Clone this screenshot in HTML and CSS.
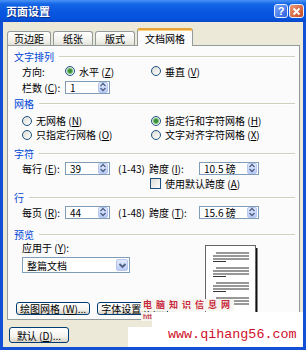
FILE: index.html
```html
<!DOCTYPE html>
<html lang="zh-CN">
<head>
    <meta charset="UTF-8">
    <title>页面设置</title>
    <link rel="stylesheet" href="styles.css">
</head>
<body>
<div class="window">
    <div class="titlebar">
        <span class="title">页面设置</span>
        <div class="title-buttons">
            <span class="tb-btn help">?</span>
            <span class="tb-btn close"><svg width="9" height="9" viewBox="0 0 9 9"><path d="M1.5 1.5L7.5 7.5M7.5 1.5L1.5 7.5" stroke="#fff" stroke-width="1.8"/></svg></span>
        </div>
    </div>

    <div class="client">
        <div class="tabs">
            <span class="tab">页边距</span>
            <span class="tab">纸张</span>
            <span class="tab">版式</span>
            <span class="tab active">文档网格</span>
        </div>

        <div class="panel">
            <div class="legend"><span>文字排列</span></div>
            <div class="row row-dir">
                <span>方向:</span>
                <label class="opt"><i class="radio checked"></i>水平 (<u>Z</u>)</label>
                <label class="opt"><i class="radio"></i>垂直 (<u>V</u>)</label>
            </div>
            <div class="row row-cols">
                <span>栏数 (<u>C</u>):</span>
                <span class="spin"><span class="val">1</span><span class="spin-btn"><svg width="8" height="10" viewBox="0 0 8 10"><path d="M1.5 4L4 1.5L6.5 4M1.5 6L4 8.5L6.5 6" fill="none" stroke="#4d6185" stroke-width="1.3"/></svg></span></span>
            </div>

            <div class="legend gap1"><span>网格</span></div>
            <div class="row row-grid first">
                <label class="opt"><i class="radio"></i>无网格 (<u>N</u>)</label>
                <label class="opt"><i class="radio checked"></i>指定行和字符网格 (<u>H</u>)</label>
            </div>
            <div class="row row-grid second">
                <label class="opt"><i class="radio"></i>只指定行网格 (<u>O</u>)</label>
                <label class="opt"><i class="radio"></i>文字对齐字符网格 (<u>X</u>)</label>
            </div>

            <div class="legend gap6"><span>字符</span></div>
            <div class="row row-num">
                <span>每行 (<u>E</u>):</span>
                <span class="spin"><span class="val">39</span><span class="spin-btn"><svg width="8" height="10" viewBox="0 0 8 10"><path d="M1.5 4L4 1.5L6.5 4M1.5 6L4 8.5L6.5 6" fill="none" stroke="#4d6185" stroke-width="1.3"/></svg></span></span>
                <span class="range">(1-43)</span>
                <span>跨度 (<u>I</u>):</span>
                <span class="spin"><span class="val">10.5 磅</span><span class="spin-btn"><svg width="8" height="10" viewBox="0 0 8 10"><path d="M1.5 4L4 1.5L6.5 4M1.5 6L4 8.5L6.5 6" fill="none" stroke="#4d6185" stroke-width="1.3"/></svg></span></span>
            </div>
            <div class="row row-num check-row">
                <label class="opt default-pitch"><i class="check"></i>使用默认跨度 (<u>A</u>)</label>
            </div>

            <div class="legend"><span>行</span></div>
            <div class="row row-num">
                <span>每页 (<u>R</u>):</span>
                <span class="spin"><span class="val">44</span><span class="spin-btn"><svg width="8" height="10" viewBox="0 0 8 10"><path d="M1.5 4L4 1.5L6.5 4M1.5 6L4 8.5L6.5 6" fill="none" stroke="#4d6185" stroke-width="1.3"/></svg></span></span>
                <span class="range">(1-48)</span>
                <span>跨度 (<u>T</u>):</span>
                <span class="spin"><span class="val">15.6 磅</span><span class="spin-btn"><svg width="8" height="10" viewBox="0 0 8 10"><path d="M1.5 4L4 1.5L6.5 4M1.5 6L4 8.5L6.5 6" fill="none" stroke="#4d6185" stroke-width="1.3"/></svg></span></span>
            </div>

            <div class="legend gap7"><span>预览</span></div>
            <div class="lower">
                <div class="lower-left">
                    <span class="apply-label">应用于 (<u>Y</u>):</span>
                    <div class="select">
                        <span class="val">整篇文档</span>
                        <span class="select-btn"><svg width="9" height="7" viewBox="0 0 9 7"><path d="M1.5 2L4.5 5L7.5 2" fill="none" stroke="#4d6185" stroke-width="1.8"/></svg></span>
                    </div>
                    <div class="btn-row">
                        <button class="btn">绘图网格 (<u>W</u>)...</button>
                        <button class="btn">字体设置 (<u>F</u>)...</button>
                    </div>
                </div>
                <svg class="page" width="53" height="70" viewBox="0 0 53 70">
                    <rect x="50" y="3" width="2.5" height="67" fill="#111"/>
                    <rect x="3" y="67.5" width="49.5" height="2.5" fill="#111"/>
                    <rect x="0.5" y="0.5" width="50" height="67" fill="#fff" stroke="#666"/>
                    <g stroke="#333" stroke-width="1.1">
                        <path d="M11 8H44M8 11H44M8 14H44M8 16.5H21"/>
                        <path d="M11 23H44M8 26H44M8 29H44M8 31.5H21"/>
                        <path d="M11 38H44M8 41H44M8 44H44M8 46.5H21"/>
                        <path d="M11 53H44M8 56H44M8 59H44M8 61.5H21"/>
                    </g>
                </svg>
            </div>
        </div>

        <div class="footer">
            <button class="btn btn-default">默认 (<u>D</u>)...</button>
        </div>
    </div>

    <div class="wm-cn">电脑知识信息网</div>
    <div class="wm-http">http://www</div>
    <div class="wm-box"><span>www.qihang56.com</span></div>
</div>
</body>
</html>
```

FILE: styles.css
```css
* {
    box-sizing: border-box;
}
body {
    margin: 0;
    font-family: "Noto Sans CJK SC", "Noto Sans", sans-serif;
    font-size: 10px;
    color: #000;
}
.window {
    position: relative;
    width: 306px;
    height: 350px;
    overflow: hidden;
    display: flex;
    flex-direction: column;
    background: #1250d6;
}
.titlebar {
    height: 22px;
    flex-shrink: 0;
    display: flex;
    align-items: center;
    justify-content: space-between;
    padding: 0 2px 0 6px;
    background: linear-gradient(#4a93f8 0%, #1466e6 18%, #0a58e0 50%, #0553dc 85%, #0a47c8 100%);
}
.title {
    color: #fff;
    font-weight: bold;
    font-size: 11px;
    text-shadow: 1px 1px 0 #0b2c8a;
}
.title-buttons {
    display: flex;
    gap: 1px;
}
.tb-btn {
    width: 14px;
    height: 14px;
    border: 1px solid #e8eefc;
    border-radius: 3px;
    display: flex;
    align-items: center;
    justify-content: center;
    color: #fff;
    font: bold 11px "Liberation Sans", sans-serif;
}
.help {
    background: linear-gradient(135deg, #7aa5f8, #2b5fdf);
}
.close {
    width: 15px;
    background: linear-gradient(135deg, #eb9a78, #c9471f);
}
.client {
    flex: 1;
    margin: 0 3px 3px;
    background: #ece9d8;
    display: flex;
    flex-direction: column;
}
.tabs {
    height: 24px;
    display: flex;
    align-items: flex-end;
    gap: 2px;
    padding-left: 4px;
    margin-bottom: -1px;
}
.tab {
    height: 14px;
    min-width: 40px;
    margin-bottom: 1px;
    padding: 0 6px;
    display: flex;
    align-items: center;
    justify-content: center;
    border: 1px solid #919b9c;
    border-bottom: none;
    border-radius: 3px 3px 0 0;
    background: linear-gradient(#fff, #f0efe9 70%, #e3e1d6);
}
.tab.active {
    position: relative;
    z-index: 1;
    height: 18px;
    margin-bottom: 0;
    padding: 0 7px;
    border-top: 2px solid #e8a23a;
    box-shadow: inset 0 1px 0 #ffd37a;
    background: #fbfbfc;
}
.panel {
    height: 275px;
    margin: 0 3px 0 4px;
    border: 1px solid #919b9c;
    background: #fbfbfc;
    display: flex;
    flex-direction: column;
    padding: 3px 0 4px;
}
.legend {
    height: 14px;
    display: flex;
    align-items: center;
    gap: 5px;
    padding: 0 4px 0 6px;
    color: #0046d5;
}
.legend::after {
    content: "";
    flex: 1;
    height: 1px;
    background: #d0d0bf;
    box-shadow: 0 1px 0 #fff;
}
.legend.gap1 {
    margin-top: 1px;
}
.legend.gap6 {
    margin-top: 6px;
}
.legend.gap7 {
    margin-top: 7px;
}
.row {
    display: grid;
    align-items: center;
    padding-left: 14px;
    white-space: nowrap;
}
.row-dir {
    height: 16px;
    grid-template-columns: 43px 86px auto;
}
.row-cols {
    height: 16px;
    grid-template-columns: 43px 45px;
}
.row-grid {
    grid-template-columns: 129px auto;
}
.row-grid.first {
    height: 14px;
    margin-top: 3px;
}
.row-grid.second {
    height: 13px;
}
.row-num {
    height: 16px;
    grid-template-columns: 43px 45px 39px 50px 60px;
}
.check-row {
    height: 14px;
}
.default-pitch {
    grid-column: 4 / 6;
    margin-left: 1px;
}
.range {
    padding-left: 8px;
}
.opt {
    display: flex;
    align-items: center;
}
u {
    text-decoration: underline;
}
.radio {
    width: 10px;
    height: 10px;
    margin-right: 4px;
    flex-shrink: 0;
    border: 1px solid #1c5180;
    border-radius: 50%;
    background: linear-gradient(135deg, #dcdbd3, #fff);
    display: flex;
    align-items: center;
    justify-content: center;
}
.radio.checked::after {
    content: "";
    width: 4px;
    height: 4px;
    border-radius: 50%;
    background: #3a8c3a;
    box-shadow: 0 0 0 1px #6fbf6a;
}
.check {
    width: 11px;
    height: 11px;
    margin-right: 4px;
    border: 1px solid #1c5180;
    background: linear-gradient(135deg, #dcdbd3, #fff);
}
.spin {
    height: 13px;
    display: flex;
    align-items: center;
    border: 1px solid #7f9db9;
    background: #fff;
    padding: 0 1px 0 4px;
}
.spin .val {
    flex: 1;
}
.spin-btn,
.select-btn {
    width: 10px;
    height: 11px;
    display: flex;
    align-items: center;
    justify-content: center;
    border: 1px solid #b7c7ee;
    border-radius: 2px;
    background: linear-gradient(#e2eafd, #b9cbf5);
}
.lower {
    flex: 1;
    display: flex;
}
.lower-left {
    flex: 1;
    display: flex;
    flex-direction: column;
    padding-left: 8px;
}
.apply-label {
    height: 14px;
    line-height: 14px;
    padding-left: 6px;
}
.select {
    width: 108px;
    height: 16px;
    margin: 2px 0 0 6px;
    display: flex;
    align-items: center;
    border: 1px solid #7f9db9;
    background: #fff;
    padding: 0 1px 0 4px;
}
.select .val {
    flex: 1;
}
.select-btn {
    width: 12px;
    height: 12px;
}
.btn-row {
    margin-top: auto;
    display: flex;
    gap: 7px;
}
.btn {
    height: 13px;
    padding: 0 3px;
    display: flex;
    align-items: center;
    font: inherit;
    color: #000;
    border: 1px solid #003c74;
    border-radius: 3px;
    background: linear-gradient(#fff 0%, #f4f3ee 60%, #d8d3c4 100%);
}
.page {
    margin: 4px 41px 0 0;
}
.footer {
    padding: 7px 0 0 6px;
}
.btn-default {
    width: 60px;
    height: 16px;
    justify-content: center;
}
/* site watermark pasted over the screenshot */
.wm-cn {
    position: absolute;
    left: 141px;
    top: 299px;
    padding: 0 0 0 2px;
    background: rgba(248, 246, 240, 0.96);
    color: #c8283c;
    font-size: 9px;
    font-weight: bold;
    line-height: 12px;
    letter-spacing: 4px;
}
.wm-http {
    position: absolute;
    left: 141px;
    top: 312px;
    padding: 0 4px 0 2px;
    background: rgba(248, 246, 240, 0.96);
    color: #c04050;
    font: bold 7px "Liberation Sans", sans-serif;
    line-height: 9px;
}
.wm-box {
    position: absolute;
    left: 128px;
    top: 312px;
    right: 3px;
    bottom: 3px;
    background: #fff;
    clip-path: polygon(0 15px, 24px 15px, 24px 0, 100% 0, 100% 100%, 0 100%);
    padding: 16px 0 0 40px;
    color: #d0102a;
    font: 13.4px "Liberation Mono", monospace;
    line-height: 13px;
}
```
